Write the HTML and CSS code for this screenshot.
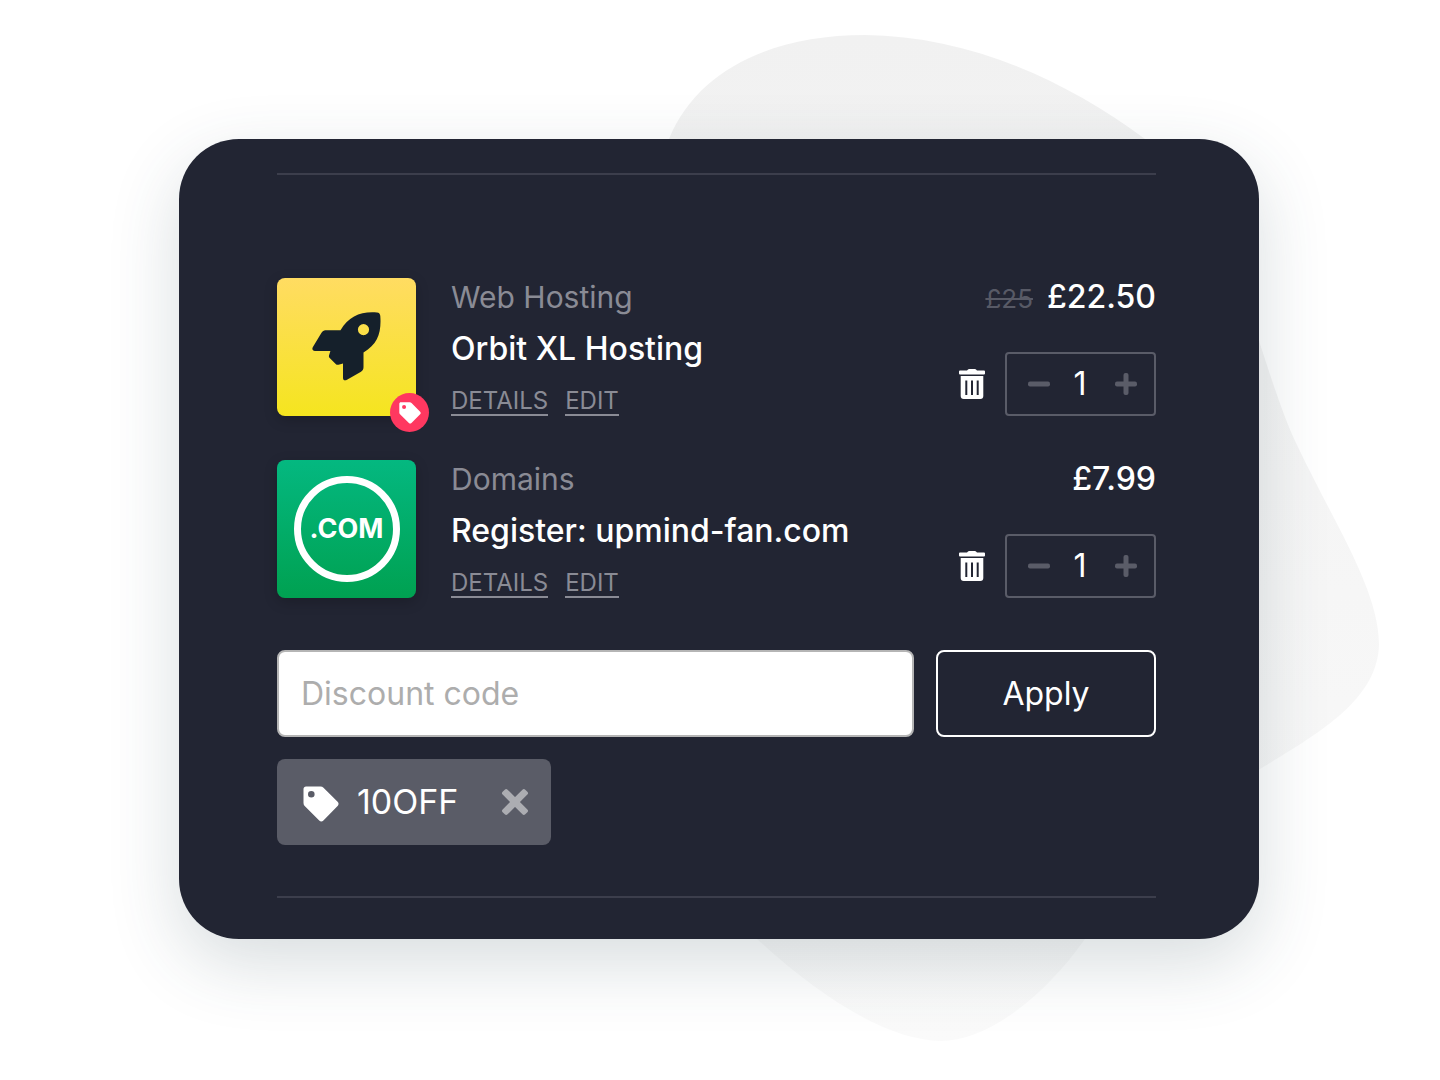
FILE: index.html
```html
<!DOCTYPE html>
<html lang="en">
<head>
    <meta charset="UTF-8">
    <meta name="viewport" content="width=device-width, initial-scale=1.0">
    <title>Basket</title>
    <link rel="stylesheet" href="styles.css">
</head>
<body>
    <!-- Background shape -->
    <svg class="blob" viewBox="0 0 1440 1080" preserveAspectRatio="xMidYMid slice" aria-hidden="true">
        <defs>
            <linearGradient id="blobFill" x1="0" y1="0" x2="0" y2="1">
                <stop offset="0" stop-color="#f1f1f1"/>
                <stop offset="1" stop-color="#fafafa"/>
            </linearGradient>
        </defs>
        <path fill="url(#blobFill)" d="M669 139C698 68 775 35 865 35C965 36 1062 77 1145 139C1215 192 1238 262 1260 344C1275 390 1285 420 1297 445C1335 525 1379 590 1379 645C1377 698 1325 730 1260 769C1180 820 1137 876 1085 939C1042 1000 985 1041 941 1041C888 1040 822 999 757 939C640 815 650 700 690 560C740 390 630 240 669 139Z"/>
    </svg>

    <!-- Shared icons -->
    <svg class="sprite" aria-hidden="true">
        <symbol id="icon-tag" viewBox="0 0 36 36">
            <path fill-rule="evenodd" d="M3 .5H17.5C18.7 .5 19.7 .9 20.5 1.7L34.6 15.8C35.9 17.1 35.9 18.7 34.6 20L20.4 34.4C19.1 35.7 17.5 35.7 16.2 34.4L1.7 20C.9 19.2 .5 18.2 .5 17V3C.5 1.6 1.6 .5 3 .5ZM8.3 5A3.3 3.3 0 1 0 8.3 11.6A3.3 3.3 0 1 0 8.3 5Z"/>
        </symbol>
        <symbol id="icon-trash" viewBox="0 0 26 30">
            <path fill-rule="evenodd" d="M1 1.4H8L9 .5Q9.4 0 10 0H16Q16.6 0 17 .5L18 1.4H25Q26 1.4 26 2.4V4.5Q26 5.5 25 5.5H1Q0 5.5 0 4.5V2.4Q0 1.4 1 1.4ZM1.7 7H24.3V27Q24.3 30 21.3 30H4.7Q1.7 30 1.7 27ZM6.3 11.5V26H8.3V11.5ZM12 11.5V26H14V11.5ZM17.7 11.5V26H19.7V11.5Z"/>
        </symbol>
        <symbol id="icon-minus" viewBox="0 0 22 22">
            <rect x="0" y="8.5" width="22" height="5" rx="2"/>
        </symbol>
        <symbol id="icon-plus" viewBox="0 0 22 22">
            <rect x="0" y="8.5" width="22" height="5" rx="2"/>
            <rect x="8.5" y="0" width="5" height="22" rx="2"/>
        </symbol>
        <symbol id="icon-close" viewBox="0 0 28 28">
            <g transform="rotate(45 14 14)">
                <rect x="-2" y="10.5" width="32" height="7" rx="2"/>
                <rect x="10.5" y="-2" width="7" height="32" rx="2"/>
            </g>
        </symbol>
    </svg>

    <main class="card">
        <div class="basket">
            <ul class="products">
                <li class="product">
                    <div class="thumb thumb-hosting">
                        <svg class="rocket" viewBox="0 0 70 70" aria-hidden="true">
                            <path fill-rule="evenodd" d="M65 .5C67 .7 68.2 2 68.3 4C69.5 20 66 32 51.5 40.5V55C51.5 57 50.8 58.5 49 59.7L35 67.7C32.7 69 31 68.2 31 65.7V51.5L26.5 52.7C25.3 53 24.5 52.7 23.7 51.9L17.7 46C17 45.2 16.7 44.5 17 43.5L18.4 39H3C.5 39 -.3 37.2 .9 35L9.5 20.7C10.8 18.7 12.5 18.2 14.5 18.2H28.5C37 4 49 -.8 65 .5ZM51.5 12A5.6 5.6 0 1 0 51.5 23.2A5.6 5.6 0 1 0 51.5 12Z"/>
                        </svg>
                        <span class="badge"><svg class="badge-icon" aria-hidden="true"><use href="#icon-tag"/></svg></span>
                    </div>
                    <div class="info">
                        <p class="category">Web Hosting</p>
                        <h2 class="title">Orbit XL Hosting</h2>
                        <div class="links">
                            <a href="#">DETAILS</a>
                            <a href="#">EDIT</a>
                        </div>
                    </div>
                    <div class="side">
                        <p class="price"><s class="old-price">£25</s>£22.50</p>
                        <div class="controls">
                            <button type="button" class="remove" aria-label="Remove Orbit XL Hosting"><svg aria-hidden="true"><use href="#icon-trash"/></svg></button>
                            <div class="quantity">
                                <button type="button" aria-label="Decrease"><svg aria-hidden="true"><use href="#icon-minus"/></svg></button>
                                <input type="text" inputmode="numeric" value="1" aria-label="Quantity">
                                <button type="button" aria-label="Increase"><svg aria-hidden="true"><use href="#icon-plus"/></svg></button>
                            </div>
                        </div>
                    </div>
                </li>
                <li class="product">
                    <div class="thumb thumb-domain">
                        <span class="tld">.COM</span>
                    </div>
                    <div class="info">
                        <p class="category">Domains</p>
                        <h2 class="title">Register: upmind-fan.com</h2>
                        <div class="links">
                            <a href="#">DETAILS</a>
                            <a href="#">EDIT</a>
                        </div>
                    </div>
                    <div class="side">
                        <p class="price">£7.99</p>
                        <div class="controls">
                            <button type="button" class="remove" aria-label="Remove upmind-fan.com"><svg aria-hidden="true"><use href="#icon-trash"/></svg></button>
                            <div class="quantity">
                                <button type="button" aria-label="Decrease"><svg aria-hidden="true"><use href="#icon-minus"/></svg></button>
                                <input type="text" inputmode="numeric" value="1" aria-label="Quantity">
                                <button type="button" aria-label="Increase"><svg aria-hidden="true"><use href="#icon-plus"/></svg></button>
                            </div>
                        </div>
                    </div>
                </li>
            </ul>

            <!-- Discount code -->
            <form class="discount">
                <input type="text" class="code" placeholder="Discount code" aria-label="Discount code">
                <button type="submit" class="apply">Apply</button>
            </form>

            <div class="coupon">
                <svg class="coupon-icon" aria-hidden="true"><use href="#icon-tag"/></svg>
                <span class="coupon-name">10OFF</span>
                <button type="button" class="coupon-remove" aria-label="Remove 10OFF"><svg aria-hidden="true"><use href="#icon-close"/></svg></button>
            </div>
        </div>
    </main>
</body>
</html>
```
FILE: styles.css
```css
/* Reset */
* {
    margin: 0;
    padding: 0;
    box-sizing: border-box;
}

body {
    position: relative;
    min-height: 100vh;
    display: flex;
    justify-content: center;
    align-items: center;
    padding: 0 2px 2px 0;
    font-family: "Inter", "Liberation Sans", sans-serif;
    font-size: 32px;
    line-height: 38px;
    color: #ffffff;
    background-color: #ffffff;
}

svg {
    display: block;
    fill: currentColor;
}

button,
input {
    font: inherit;
    color: inherit;
    background: none;
    border: none;
}

button {
    cursor: pointer;
}

.sprite {
    position: absolute;
    width: 0;
    height: 0;
}

/* Background shape */
.blob {
    position: absolute;
    top: 0;
    left: 0;
    width: 100%;
    height: 100%;
}

/* Card */
.card {
    position: relative;
    width: 90%;
    max-width: 1080px;
    padding: 34px 103px 41px 98px;
    background-color: #222533;
    border-radius: 60px;
    box-shadow: 0 24px 70px rgba(50, 75, 85, 0.19);
}

.basket {
    padding: 103px 0 51px;
    border-top: 2px solid #3c3e4c;
    border-bottom: 2px solid #3c3e4c;
}

/* Products */
.products {
    display: flex;
    flex-direction: column;
    gap: 44px;
    list-style: none;
}

.product {
    display: flex;
    gap: 35px;
}

.thumb {
    position: relative;
    flex: none;
    display: flex;
    justify-content: center;
    align-items: center;
    width: 139px;
    height: 138px;
    border-radius: 8px;
    box-shadow: 0 4px 14px rgba(0, 0, 0, 0.2);
}

.thumb-hosting {
    background: linear-gradient(#ffdc62, #f5e51f);
    color: #15202b;
}

.thumb-domain {
    background: linear-gradient(#04b880, #00a151);
}

.rocket {
    width: 70px;
    height: 70px;
}

.badge {
    position: absolute;
    right: -13px;
    bottom: -16px;
    display: flex;
    justify-content: center;
    align-items: center;
    width: 39px;
    height: 39px;
    border-radius: 50%;
    background-color: #ff3860;
    color: #ffffff;
}

.badge-icon {
    width: 22px;
    height: 22px;
}

.tld {
    display: flex;
    justify-content: center;
    align-items: center;
    width: 106px;
    height: 106px;
    border: 7px solid #ffffff;
    border-radius: 50%;
    font-size: 27px;
    font-weight: 700;
}

.info {
    flex: 1;
}

.category {
    font-size: 30px;
    color: #8a8b95;
}

.title {
    margin: 14px 0 20px;
    font-size: 32px;
    font-weight: 500;
}

.links {
    display: flex;
    gap: 17px;
}

.links a {
    font-size: 24px;
    line-height: 26px;
    color: #8a8b95;
    text-decoration: none;
    border-bottom: 2px solid #8a8b95;
}

.side {
    display: flex;
    flex-direction: column;
    justify-content: space-between;
    align-items: flex-end;
}

.price {
    font-weight: 500;
}

.old-price {
    margin-right: 14px;
    font-size: 26px;
    font-weight: 400;
    color: #585a66;
}

.controls {
    display: flex;
    align-items: center;
    gap: 20px;
}

.remove svg {
    width: 26px;
    height: 30px;
}

.quantity {
    display: flex;
    align-items: center;
    width: 151px;
    height: 64px;
    padding: 0 17px 0 21px;
    border: 2px solid #5a5c68;
    border-radius: 4px;
}

.quantity button {
    color: #5a5c68;
}

.quantity svg {
    width: 22px;
    height: 22px;
}

.quantity input {
    width: 60px;
    margin-right: 5px;
    text-align: center;
}

/* Discount code */
.discount {
    display: flex;
    gap: 22px;
    margin-top: 52px;
}

.code,
.apply {
    height: 87px;
    border: 2px solid #ffffff;
    border-radius: 8px;
}

.code {
    flex: 1;
    min-width: 0;
    padding: 0 22px;
    background-color: #ffffff;
    border-color: #b5b5b5;
    color: #222533;
}

.code::placeholder {
    color: #adadad;
    opacity: 1;
}

.apply {
    width: 220px;
}

/* Applied coupon */
.coupon {
    display: inline-flex;
    align-items: center;
    height: 86px;
    margin-top: 22px;
    padding: 0 22px 0 26px;
    background-color: #5a5c67;
    border-radius: 8px;
    vertical-align: top;
}

.coupon-icon {
    width: 36px;
    height: 36px;
    margin-top: 4px;
}

.coupon-name {
    margin: 0 43px 0 18px;
    font-size: 34px;
}

.coupon-remove {
    color: #acadb2;
}

.coupon-remove svg {
    width: 28px;
    height: 28px;
}
```
